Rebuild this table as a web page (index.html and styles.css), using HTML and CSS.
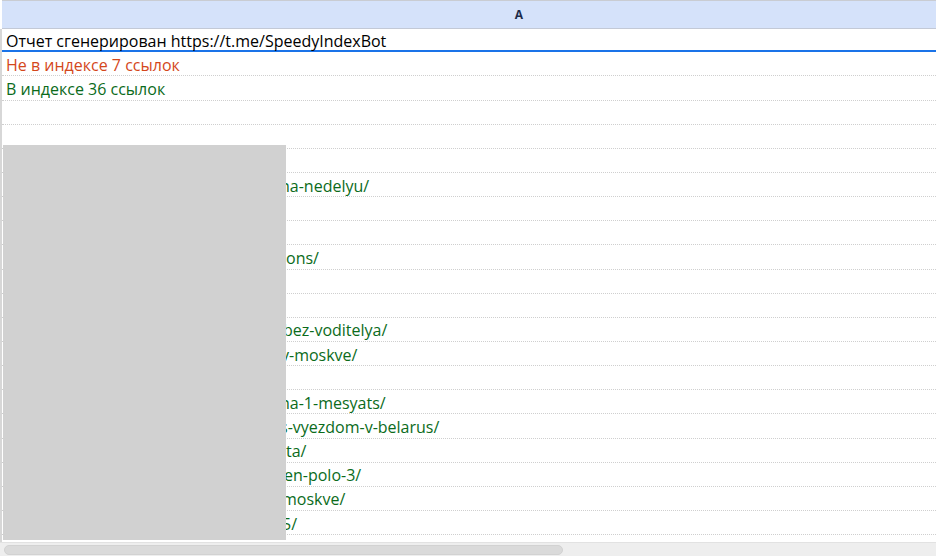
FILE: index.html
```html
<!DOCTYPE html>
<html lang="ru">
<head>
<meta charset="utf-8">
<title>SpeedyIndexBot report</title>
<link rel="stylesheet" href="styles.css">
</head>
<body>
<div class="sheet">
  <div class="colhead"><span class="col-label">A</span></div>
  <div class="grid">
    <div class="row sel"><span class="cell">Отчет сгенерирован https://t.me/SpeedyIndexBot</span></div>
    <div class="row red"><span class="cell">Не в индексе 7 ссылок</span></div>
    <div class="row green"><span class="cell">В индексе 36 ссылок</span></div>
    <div class="row"></div>
    <div class="row"></div>
    <div class="row"></div>
    <div class="row green"><span class="cell tail" style="--x:280px">na-nedelyu/</span></div>
    <div class="row"></div>
    <div class="row"></div>
    <div class="row green"><span class="cell tail" style="--x:286px">ons/</span></div>
    <div class="row"></div>
    <div class="row"></div>
    <div class="row green"><span class="cell tail" style="--x:283px">bez-voditelya/</span></div>
    <div class="row green"><span class="cell tail" style="--x:281px">v-moskve/</span></div>
    <div class="row"></div>
    <div class="row green"><span class="cell tail" style="--x:280px">na-1-mesyats/</span></div>
    <div class="row green"><span class="cell tail" style="--x:280px">s-vyezdom-v-belarus/</span></div>
    <div class="row green"><span class="cell tail" style="--x:286px">ta/</span></div>
    <div class="row green"><span class="cell tail" style="--x:284px">en-polo-3/</span></div>
    <div class="row green"><span class="cell tail" style="--x:282px">moskve/</span></div>
    <div class="row green"><span class="cell tail" style="--x:282px">5/</span></div>
    <div class="row"></div>
    <div class="redact"></div>
  </div>
  <div class="hscroll"><div class="thumb"></div></div>
</div>
</body>
</html>
```
FILE: styles.css
```css
* { box-sizing: border-box; }
html, body { margin: 0; padding: 0; }
body {
  width: 936px;
  height: 556px;
  overflow: hidden;
  background: #ffffff;
  font-family: "Open Sans", "Noto Sans", sans-serif;
}
.sheet {
  display: flex;
  flex-direction: column;
  height: 556px;
  width: 936px;
  overflow: hidden;
}
.colhead {
  height: 29px;
  flex: none;
  margin-left: 2px;
  background: #d5e2fa;
  border-top: 1px solid #c9ccd2;
  border-bottom: 1px solid #c3c9d6;
  display: flex;
  align-items: center;
  justify-content: center;
  width: 1034px;
}
.col-label {
  font-size: 12px;
  font-weight: bold;
  color: #1d2b4a;
  font-family: "Open Sans", "Liberation Sans", sans-serif;
}
.grid {
  position: relative;
  height: 513px;
  flex: none;
  overflow: hidden;
  border-left: 2px solid #d7d7d7;
}
.row {
  height: 24.15px;
  border-bottom: 1px dotted #cfcfcf;
  display: flex;
  align-items: center;
  font-size: 16px;
  color: #000;
  white-space: nowrap;
  padding-top: 2px;
}
.row.sel {
  height: 23.3px;
  border-bottom: 2px solid #1a73e8;
  border-left: 1px solid #1a73e8;
  margin-left: -1px;
}
.cell { padding-left: 4px; }
.tail { padding-left: calc(var(--x) - 2px); }
.red { color: #d4471b; }
.green { color: #0b6b1b; }
.redact {
  position: absolute;
  left: 1px;
  top: 116px;
  width: 283px;
  height: 395px;
  background: #d1d1d1;
}
.hscroll {
  flex: 1;
  background: #eeeeee;
  border-top: 1px solid #e2e2e2;
  padding: 2px 0 0 4px;
}
.thumb {
  width: 559px;
  height: 10px;
  border-radius: 5px;
  background: #dadada;
  border: 1px solid #d2d2d2;
}
```
